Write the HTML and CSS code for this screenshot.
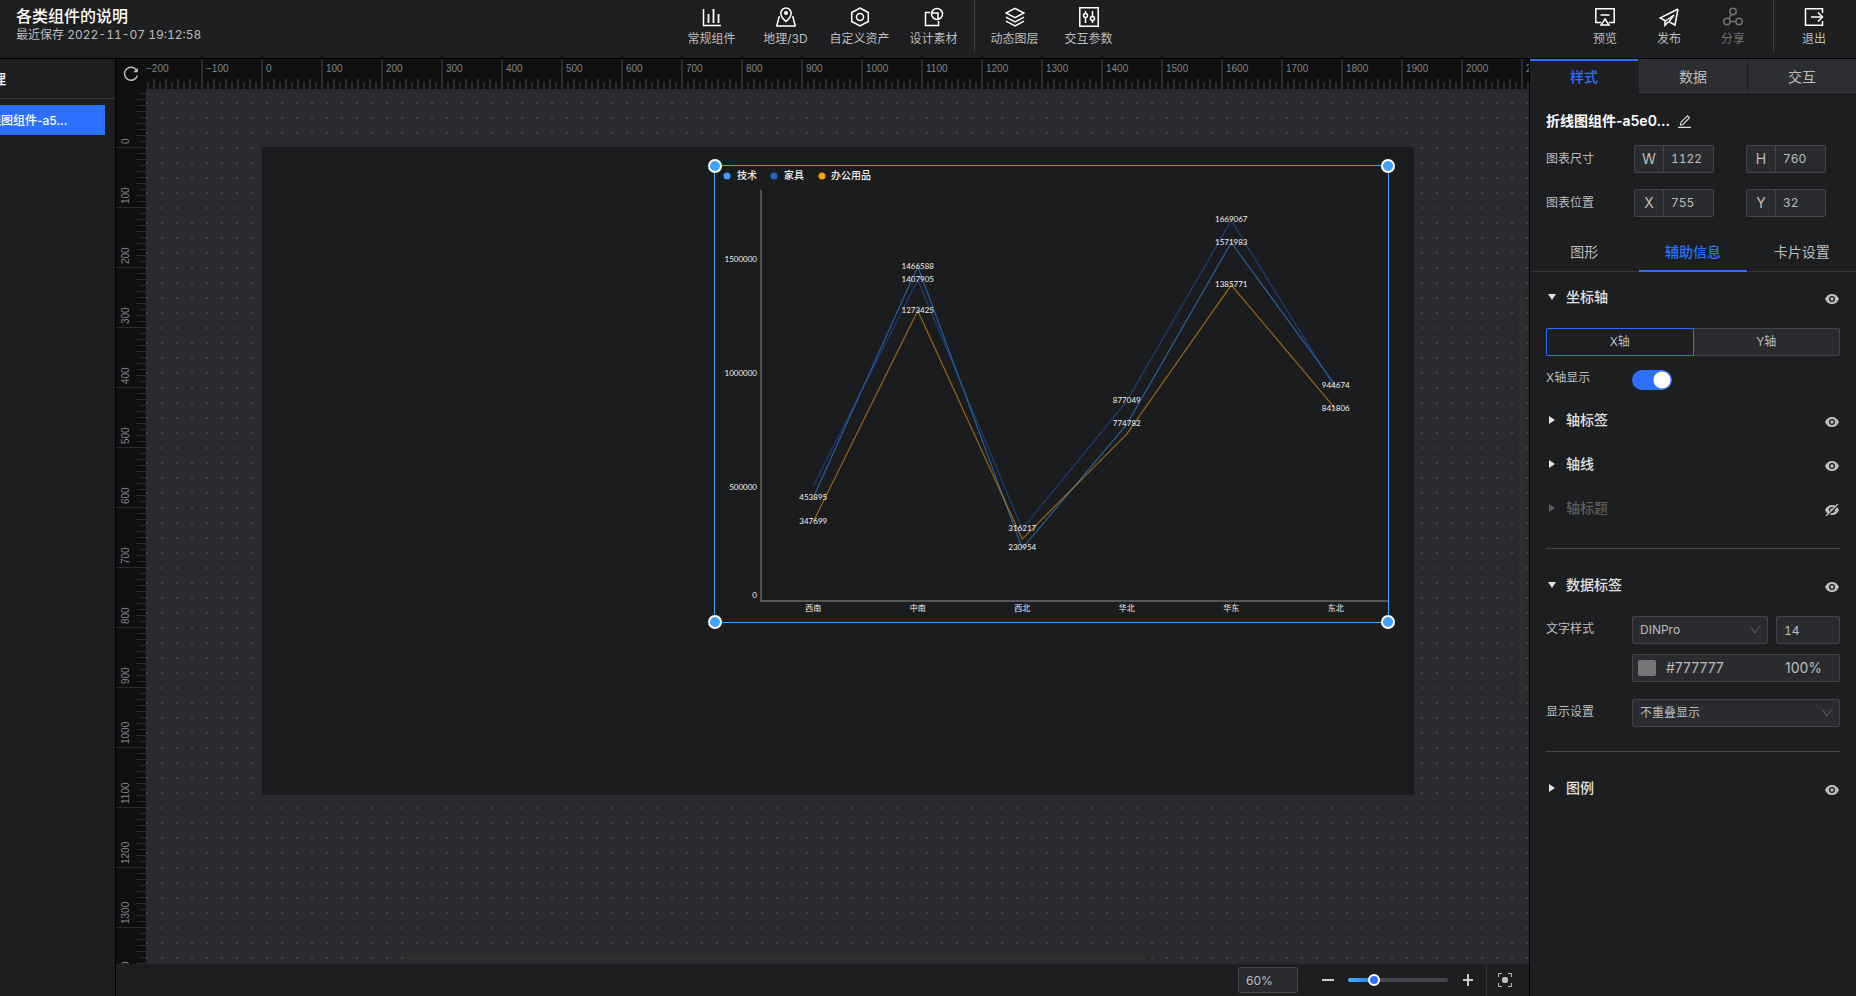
FILE: index.html
```html
<!DOCTYPE html>
<html lang="zh-CN">
<head>
    <meta charset="UTF-8">
    <meta name="viewport" content="width=device-width, initial-scale=1.0">
    <title>各类组件的说明</title>
    <link rel="stylesheet" href="styles.css">
</head>
<body>
    <svg width="0" height="0" class="sprite" aria-hidden="true">
        <symbol id="eye" viewBox="0 0 14 12">
            <path fill="currentColor" fill-rule="evenodd" d="M7 1C3.600 1 1.200 3 0 6c1.200 3 3.600 5 7 5s5.800-2 7-5c-1.200-3-3.600-5-7-5zm0 2a3 3 0 1 1 0 6 3 3 0 0 1 0-6z"/>
            <circle cx="7" cy="6" r="1.700" fill="currentColor"/>
        </symbol>
        <symbol id="eye-off" viewBox="0 0 14 12">
            <path fill="currentColor" fill-rule="evenodd" d="M7 1C3.600 1 1.200 3 0 6c1.200 3 3.600 5 7 5s5.800-2 7-5c-1.200-3-3.600-5-7-5zm0 2a3 3 0 1 1 0 6 3 3 0 0 1 0-6z"/>
            <circle cx="7" cy="6" r="1.700" fill="currentColor"/>
            <path d="M2 12.500L14 .5" stroke="#1d1e20" stroke-width="1.500"/>
            <path d="M1 12L13 0" stroke="currentColor" stroke-width="1.300"/>
        </symbol>
    </svg>

    <header class="header">
        <div class="project">
            <h1>各类组件的说明</h1>
            <p>最近保存 2022-11-07 19:12:58</p>
        </div>
        <nav class="toolbar">
            <button class="tool">
                <svg viewBox="0 0 20 20"><path d="M1.500 2v16.500H19" /><path d="M6.500 7v9M11.500 2v14M16.500 7v9" stroke-width="1.800"/></svg>
                常规组件
            </button>
            <button class="tool">
                <svg viewBox="0 0 20 20"><path d="M4 10H3L.8 19h18.400L17 10h-1"/><path d="M10 14.500C7 12 4.800 9.500 4.800 6.300a5.200 5.200 0 0 1 10.400 0C15.200 9.500 13 12 10 14.500z"/><circle cx="10" cy="6" r="2" fill="currentColor" stroke="none"/></svg>
                地理/3D
            </button>
            <button class="tool">
                <svg viewBox="0 0 20 20"><path d="M10 1l8.300 4.500v9L10 19l-8.300-4.500v-9z"/><circle cx="10" cy="10" r="3.500"/></svg>
                自定义资产
            </button>
            <button class="tool">
                <svg viewBox="0 0 20 20"><path d="M6 5.500H1.500v13h13V14"/><circle cx="13" cy="7" r="5.500"/><path d="M8 6h6v6"/></svg>
                设计素材
            </button>
            <span class="divider"></span>
            <button class="tool">
                <svg viewBox="0 0 20 20"><path d="M10 1.300l9 4.700-9 4.700L1 6z"/><path d="M1 10.200l9 4.600 9-4.600M1 14.200l9 4.600 9-4.600"/></svg>
                动态图层
            </button>
            <button class="tool">
                <svg viewBox="0 0 20 20"><path d="M.8.8h18.400v18.400H.8z"/><path d="M6.500 4v2.500M6.500 10.500V16M13.500 4v5.500M13.500 13.500V16"/><circle cx="6.500" cy="8.500" r="2"/><circle cx="13.500" cy="11.500" r="2"/></svg>
                交互参数
            </button>
        </nav>
        <div class="actions">
            <button class="tool">
                <svg viewBox="0 0 20 20"><path d="M6 15.500H.8V1.800h18.400v13.700H14M5.500 8h9"/><path d="M10 12l4 6H6z"/></svg>
                预览
            </button>
            <button class="tool">
                <svg viewBox="0 0 20 20"><path d="M19 2L1 11l5 2.500v4.800l3-3.300M19 2l-3 16-6-3.200L15 8l-8.500 6"/></svg>
                发布
            </button>
            <button class="tool" disabled>
                <svg viewBox="0 0 20 20"><circle cx="10" cy="4.500" r="3.200"/><circle cx="4" cy="14.500" r="3.200"/><circle cx="16" cy="14.500" r="3.200"/><path d="M8.300 7.300L5.700 11.800M7.200 14.500h5.600"/></svg>
                分享
            </button>
            <span class="divider"></span>
            <button class="tool">
                <svg viewBox="0 0 20 20"><path d="M18.500 6V1.800h-17v16.500h17V14M7 10h11M14 5.500l4.500 4.500-4.500 4.500"/></svg>
                退出
            </button>
        </div>
    </header>

    <div class="workspace">
        <aside class="layers">
            <h2>图层管理</h2>
            <button class="layer">折线图组件-a5...</button>
        </aside>

        <main class="editor">
            <div class="stage">
                <button class="reset" aria-label="重置">
                    <svg viewBox="0 0 16 16"><path d="M13.500 4.200A6.500 6.500 0 1 0 14.300 9.500" fill="none" stroke="currentColor" stroke-width="1.400"/><path d="M14.800 1.800v4.400h-4.400z" fill="currentColor"/></svg>
                </button>
                <div class="ruler-x" id="ruler-x"></div>
                <div class="ruler-y" id="ruler-y"></div>
                <div class="canvas">
                    <div class="artboard"></div>
                    <div class="component">
                        <svg viewBox="0 0 673 456" class="chart" id="chart">
                            <g class="legend">
                                <circle cx="12" cy="10" r="3.500" fill="#3d9fff"/><text x="22" y="13">技术</text>
                                <circle cx="59" cy="10" r="3.500" fill="#2563c9"/><text x="69" y="13">家具</text>
                                <circle cx="107" cy="10" r="3.500" fill="#fa9f0a"/><text x="116" y="13">办公用品</text>
                            </g>
                            <path class="axis" d="M46 24V435H673"/>
                        </svg>
                        <i class="handle tl"></i>
                        <i class="handle tr"></i>
                        <i class="handle bl"></i>
                        <i class="handle br"></i>
                    </div>
                    <div class="scroll-x"></div>
                    <div class="scroll-y"></div>
                </div>
            </div>
            <footer class="zoombar">
                <input class="field zoom-value" type="text" value="60%" aria-label="缩放比例">
                <button class="step" aria-label="缩小"><svg viewBox="0 0 12 12"><path d="M0 6h12"/></svg></button>
                <input class="slider" type="range" min="0" max="100" value="23" aria-label="缩放">
                <button class="step" aria-label="放大"><svg viewBox="0 0 12 12"><path d="M1 6h10M6 0v12"/></svg></button>
                <button class="fit" aria-label="适应画布">
                    <svg viewBox="0 0 14 14"><path d="M.5 4V.5H4M10 .5h3.500V4M13.500 10v3.500H10M4 13.500H.5V10" fill="none" stroke="currentColor"/><rect x="4" y="4" width="6" height="6" rx="2" fill="currentColor"/></svg>
                </button>
            </footer>
        </main>

        <aside class="panel">
            <div class="tabs">
                <button class="tab active">样式</button>
                <button class="tab">数据</button>
                <button class="tab">交互</button>
            </div>
            <div class="basic">
                <h2 class="name">折线图组件-a5e0...
                    <button aria-label="重命名"><svg viewBox="0 0 13 13"><path d="M2.500 10l.5-2.800L9.500.8l2 1.900L5 9.500zM0 12.400h13" fill="none" stroke="currentColor" stroke-width="1.100"/></svg></button>
                </h2>
                <div class="size-row">
                    <span class="label">图表尺寸</span>
                    <label class="number"><span>W</span><input type="text" value="1122"></label>
                    <label class="number"><span>H</span><input type="text" value="760"></label>
                </div>
                <div class="size-row">
                    <span class="label">图表位置</span>
                    <label class="number"><span>X</span><input type="text" value="755"></label>
                    <label class="number"><span>Y</span><input type="text" value="32"></label>
                </div>
            </div>
            <div class="subtabs">
                <button class="subtab">图形</button>
                <button class="subtab active">辅助信息</button>
                <button class="subtab">卡片设置</button>
            </div>
            <div class="settings">
                <section class="group">
                    <h3 class="fold open">坐标轴<button class="eye" aria-label="显示坐标轴"><svg><use href="#eye"/></svg></button></h3>
                    <div class="segment">
                        <button class="active">X轴</button>
                        <button>Y轴</button>
                    </div>
                    <div class="row switch-row">
                        <label class="label" for="axis-show">X轴显示</label>
                        <input class="switch" type="checkbox" id="axis-show" checked>
                    </div>
                    <h3 class="fold">轴标签<button class="eye" aria-label="显示轴标签"><svg><use href="#eye"/></svg></button></h3>
                    <h3 class="fold">轴线<button class="eye" aria-label="显示轴线"><svg><use href="#eye"/></svg></button></h3>
                    <h3 class="fold off">轴标题<button class="eye" aria-label="显示轴标题"><svg><use href="#eye-off"/></svg></button></h3>
                </section>
                <section class="group">
                    <h3 class="fold open">数据标签<button class="eye" aria-label="显示数据标签"><svg><use href="#eye"/></svg></button></h3>
                    <div class="row first">
                        <label class="label" for="font">文字样式</label>
                        <select class="field" id="font"><option>DINPro</option></select>
                        <input class="field font-size" type="text" value="14" aria-label="字号">
                    </div>
                    <div class="row color-row">
                        <div class="field color">
                            <span class="swatch"></span>
                            <input class="hex" type="text" value="#777777" aria-label="颜色">
                            <input class="alpha" type="text" value="100%" aria-label="不透明度">
                        </div>
                    </div>
                    <div class="row last">
                        <label class="label" for="overlap">显示设置</label>
                        <select class="field" id="overlap"><option>不重叠显示</option></select>
                    </div>
                </section>
                <section class="group">
                    <h3 class="fold">图例<button class="eye" aria-label="显示图例"><svg><use href="#eye"/></svg></button></h3>
                </section>
            </div>
        </aside>
    </div>

    <script src="script.js"></script>
</body>
</html>
```
FILE: styles.css
```css
* {
    box-sizing: border-box;
}

body {
    margin: 0;
    height: 100vh;
    display: flex;
    flex-direction: column;
    overflow: hidden;
    background: #1d1e20;
    color: #bcbdbe;
    font: 12px/18px Inter, "Noto Sans CJK SC", sans-serif;
}

button, input, select {
    font: inherit;
    color: inherit;
    margin: 0;
    padding: 0;
    border: none;
    border-radius: 0;
    background: none;
    outline: none;
}

button {
    cursor: pointer;
}

h1, h2, h3, p {
    margin: 0;
}

svg {
    display: block;
}

.sprite {
    position: absolute;
}

/* header */
.header {
    flex: none;
    display: flex;
    height: 59px;
    border-bottom: 1px solid #000;
}

.project {
    flex: 1 1 32px;
    padding: 6px 16px;
}

.project h1 {
    font-size: 16px;
    line-height: 20px;
    font-weight: 500;
    color: #fff;
}

.project p {
    font-variant-numeric: tabular-nums;
}

.toolbar {
    display: flex;
}

.actions {
    flex: 1 1 88px;
    display: flex;
    justify-content: flex-end;
    padding-right: 10px;
}

.tool {
    flex: none;
    width: 74px;
    height: 52px;
    padding-top: 7px;
    display: flex;
    flex-direction: column;
    align-items: center;
    gap: 3px;
    white-space: nowrap;
}

.actions .tool {
    width: 64px;
}

.tool svg {
    flex: none;
    width: 20px;
    height: 20px;
    fill: none;
    stroke: currentColor;
    stroke-width: 1.5;
    color: #fff;
}

.tool:disabled, .tool:disabled svg {
    color: #707173;
}

.divider {
    width: 1px;
    height: 52px;
    margin: 0 3px;
    background: #404144;
}

.actions .divider {
    margin: 0 8px;
}

/* layer list */
.workspace {
    flex: 1;
    min-height: 0;
    display: flex;
}

.layers {
    flex: none;
    width: 116px;
    overflow: hidden;
    border-right: 1px solid #000;
}

.layers h2 {
    height: 40px;
    text-indent: -50px;
    font-size: 14px;
    line-height: 40px;
    font-weight: 500;
    color: #fff;
    border-bottom: 1px solid #37383b;
    white-space: nowrap;
}

.layer {
    display: block;
    width: 105px;
    height: 30px;
    margin-top: 6px;
    padding-top: 2px;
    text-indent: -23px;
    text-align: left;
    font-weight: 500;
    color: #fff;
    background: #2d70ff;
    white-space: nowrap;
    overflow: hidden;
}

/* editor */
.editor {
    flex: 1;
    min-width: 0;
    display: flex;
    flex-direction: column;
}

.stage {
    flex: 1;
    min-height: 0;
    display: grid;
    grid-template: 30px minmax(0, 1fr) / 30px minmax(0, 1fr);
    background: #0f0f0f;
}

.reset svg {
    width: 16px;
    height: 16px;
    margin: 0 auto;
}

.ruler-x, .ruler-y {
    display: flex;
    overflow: hidden;
    color: #7f858d;
    font: 10px/12px "Liberation Sans", sans-serif;
}

.ruler-x {
    background:
        repeating-linear-gradient(90deg, #2b2b2c 0 2px, transparent 2px 60px) -5px 0,
        repeating-linear-gradient(90deg, #2b2b2c 0 2px, transparent 2px 12px) -5px 20px,
        repeating-linear-gradient(90deg, #2b2b2c 0 2px, transparent 2px 12px) -11px 23px;
    background-size: 200% 100%;
    background-repeat: no-repeat;
}

.ruler-x span {
    flex: none;
    width: 60px;
    padding: 4px 0;
}

.ruler-y {
    flex-direction: column;
    background:
        repeating-linear-gradient(180deg, #2b2b2c 0 1px, transparent 1px 60px) 0 -2px,
        repeating-linear-gradient(180deg, #2b2b2c 0 1px, transparent 1px 12px) 20px -2px,
        repeating-linear-gradient(180deg, #2b2b2c 0 1px, transparent 1px 12px) 23px -8px;
    background-size: 100% 200%;
    background-repeat: no-repeat;
}

.ruler-y span {
    flex: none;
    height: 60px;
    padding: 3px 4px;
    writing-mode: vertical-rl;
    transform: rotate(180deg);
}

.ruler-y span:first-child {
    height: 58px;
}

.canvas {
    position: relative;
    overflow: hidden;
    background:
        conic-gradient(from 0deg at 2px 2px, transparent 270deg, #43444a 0) 0 13px / 15px 15px,
        #2a2b2f;
}

.artboard {
    position: absolute;
    left: 116px;
    top: 58px;
    width: 1152px;
    height: 648px;
    background: #1b1c1d;
}

.component {
    position: absolute;
    left: 568px;
    top: 76px;
    width: 675px;
    height: 458px;
    border: 1px solid #3fa4ff;
}

.chart {
    width: 100%;
    height: 100%;
    fill: #f0f0f0;
    font: 8px Lato, "Noto Sans CJK SC", sans-serif;
}

.legend {
    font-size: 10px;
    font-weight: 500;
}

.axis {
    fill: none;
    stroke: #6a6b6b;
    stroke-width: 1.4;
}

.line {
    fill: none;
    stroke-width: 1.2;
    stroke-opacity: .6;
}

.chart .tick {
    text-anchor: end;
}

.chart .mid {
    text-anchor: middle;
}

.handle {
    position: absolute;
    width: 14px;
    height: 14px;
    border: 2px solid #fff;
    border-radius: 50%;
    background: #3fa4ff;
}

.tl, .tr {
    top: -7px;
}

.bl, .br {
    bottom: -7px;
}

.tl, .bl {
    left: -7px;
}

.tr, .br {
    right: -7px;
}

.scroll-x, .scroll-y {
    position: absolute;
    background: rgba(48, 48, 48, .8);
    border-radius: 3px;
}

.scroll-x {
    left: 260px;
    bottom: 4px;
    width: 740px;
    height: 6px;
}

.scroll-y {
    right: 4px;
    top: 201px;
    width: 6px;
    height: 417px;
}

/* zoom bar */
.field {
    height: 28px;
    padding: 0 7px;
    border: 1px solid #434447;
    border-radius: 2px;
    background-color: #2a2b2f;
}

.zoombar {
    flex: none;
    height: 32px;
    display: flex;
    justify-content: flex-end;
    align-items: center;
}

.zoom-value {
    width: 60px;
    height: 26px;
    margin-right: 24px;
}

.step svg {
    width: 12px;
    height: 12px;
    fill: none;
    stroke: #c8c8c9;
    stroke-width: 2;
}

.slider {
    appearance: none;
    width: 100px;
    height: 12px;
    margin: 0 14px;
}

.slider::-webkit-slider-runnable-track {
    height: 4px;
    border-radius: 2px;
    background: linear-gradient(90deg, #3fb4ff, #2d70ff 26%, #45464c 26%);
}

.slider::-webkit-slider-thumb {
    appearance: none;
    width: 12px;
    height: 12px;
    margin-top: -4px;
    border: 2px solid #fff;
    border-radius: 50%;
    background: #2d70ff;
}

.fit {
    width: 43px;
    height: 32px;
    margin-left: 12px;
    padding-left: 11px;
    border-left: 1px solid #333437;
}

.fit svg {
    width: 14px;
    height: 14px;
}

/* property panel */
.panel {
    flex: none;
    width: 327px;
    border-left: 1px solid #000;
}

.tabs {
    display: flex;
    height: 34px;
}

.tab {
    flex: 1;
    padding-top: 2px;
    font-size: 14px;
    background: #2d2e32;
    border-left: 1px solid #1d1e20;
    border-bottom: 1px solid #37383b;
}

.tab.active {
    padding-top: 0;
    background: none;
    border: none;
    border-top: 2px solid #2d70ff;
    color: #2d70ff;
    font-weight: 500;
}

.basic {
    padding: 18px 16px 0;
}

.name {
    display: flex;
    align-items: center;
    gap: 8px;
    height: 20px;
    font-size: 14px;
    font-weight: 600;
    color: #fff;
}

.name svg {
    width: 13px;
    height: 13px;
    color: #ddd;
}

.size-row {
    display: flex;
    align-items: center;
    height: 28px;
    margin-top: 16px;
}

.name + .size-row {
    margin-top: 14px;
}

.label {
    flex: none;
    width: 86px;
    line-height: 26px;
}

.size-row .label {
    width: 88px;
}

.number {
    display: flex;
    width: 80px;
    height: 28px;
    margin-right: 32px;
    line-height: 26px;
    border: 1px solid #434447;
    border-radius: 2px;
    background: #2a2b2f;
}

.number span {
    width: 29px;
    text-align: center;
    font-size: 14px;
    border-right: 1px solid #434447;
}

.number input {
    width: 49px;
    padding-left: 7px;
    font-variant-numeric: tabular-nums;
}

.subtabs {
    display: flex;
    height: 38px;
    margin-top: 17px;
    border-bottom: 1px solid #333437;
}

.subtab {
    flex: 1;
    height: 38px;
    font-size: 14px;
    border-bottom: 2px solid transparent;
}

.subtab.active {
    color: #2d70ff;
    font-weight: 500;
    border-color: #2d70ff;
}

.settings {
    padding: 3px 16px;
}

.group + .group {
    margin-top: 18px;
    padding-top: 14px;
    border-top: 1px solid #434447;
}

.fold {
    display: flex;
    align-items: center;
    height: 44px;
    font-size: 14px;
    font-weight: 500;
    color: #e1e1e2;
}

.fold::before {
    content: "";
    width: 6px;
    height: 8px;
    margin: 0 11px 0 3px;
    background: currentColor;
    clip-path: polygon(0 0, 100% 50%, 0 100%);
}

.fold.open::before {
    width: 8px;
    height: 6px;
    margin: 0 10px 0 2px;
    clip-path: polygon(0 0, 100% 0, 50% 100%);
}

.fold.off {
    color: #5a5b5d;
}

.eye {
    margin: 4px 1px 0 auto;
    color: #bcbdbe;
}

.eye svg {
    width: 14px;
    height: 12px;
    overflow: visible;
}

.segment {
    display: flex;
    margin-top: 9px;
}

.segment button {
    flex: 1;
    height: 28px;
    border: 1px solid #434447;
    border-left: none;
    border-radius: 0 2px 2px 0;
    background: #2a2b2f;
}

.segment .active {
    border: 1px solid #2d70ff;
    border-radius: 2px 0 0 2px;
    background: none;
}

.row {
    display: flex;
    height: 28px;
    margin-top: 17px;
}

.row.first {
    margin-top: 9px;
}

.row.last {
    margin-bottom: 24px;
}

.group:last-child {
    margin-top: 0;
}

.row select {
    flex: 1;
    min-width: 0;
    appearance: none;
    background-image: url("data:image/svg+xml,%3Csvg xmlns='http://www.w3.org/2000/svg' width='10' height='8'%3E%3Cpath d='M.5.5L5 7L9.500.5' fill='none' stroke='%23646568'/%3E%3C/svg%3E");
    background-repeat: no-repeat;
    background-position: right 7px center;
}

.switch-row {
    height: 32px;
    margin: 9px 0 1px;
}

.switch {
    appearance: none;
    width: 40px;
    height: 20px;
    margin-top: 5px;
    border-radius: 10px;
    background: radial-gradient(circle at 30px 10px, #fff 8px, #2d70ff 9px);
}

.font-size {
    width: 64px;
    margin-left: 8px;
    font-variant-numeric: tabular-nums;
}

.color-row {
    margin-top: 10px;
    padding-left: 86px;
}

.color {
    display: flex;
    align-items: center;
    width: 100%;
    padding: 0 5px;
    font-size: 14px;
}

.swatch {
    width: 18px;
    height: 16px;
    border-radius: 2px;
    background: #777;
}

.hex {
    flex: 1;
    min-width: 0;
    padding-left: 10px;
}

.alpha {
    width: 49px;
}
```
FILE: script.js
```js
const svgNS = 'http://www.w3.org/2000/svg';
const chart = document.getElementById('chart');

const regions = ['西南', '中南', '西北', '华北', '华东', '东北'];
const series = [
    { color: '#2a8df0', values: [453895, 1466588, 230954, 774782, 1571983, 944674], hidden: [] },
    { color: '#1b55b8', values: [504000, 1407905, 316217, 877049, 1669067, 929000], hidden: [0, 5] },
    { color: '#e8940f', values: [347699, 1273425, 272000, 732000, 1385771, 841806], hidden: [2, 3] }
];

const scaleX = i => 46 + 104.5 * (i + 0.5);
const scaleY = v => 435 - v * 114 / 500000;

function add(tag, attrs, text) {
    const el = document.createElementNS(svgNS, tag);
    for (const key in attrs) {
        el.setAttribute(key, attrs[key]);
    }
    if (text !== undefined) {
        el.textContent = text;
    }
    chart.appendChild(el);
}

series.forEach(s => {
    const points = s.values.map((v, i) => scaleX(i) + ',' + scaleY(v)).join(' ');
    add('polyline', { class: 'line', points: points, stroke: s.color });
});

// labels that would overlap are left out
series.forEach(s => {
    s.values.forEach((v, i) => {
        if (!s.hidden.includes(i)) {
            add('text', { class: 'mid', x: scaleX(i), y: scaleY(v) + 2 }, v);
        }
    });
});

regions.forEach((name, i) => add('text', { class: 'mid', x: scaleX(i), y: 445 }, name));

[500000, 1000000, 1500000].forEach(v => add('text', { class: 'tick', x: 42, y: scaleY(v) + 3 }, v));
add('text', { class: 'tick', x: 42, y: 432 }, 0);

function ruler(id, from, to) {
    const box = document.getElementById(id);
    for (let v = from; v <= to; v += 100) {
        const mark = document.createElement('span');
        mark.textContent = String(v).replace('-', '−');
        box.appendChild(mark);
    }
}

ruler('ruler-x', -200, 2100);
ruler('ruler-y', 0, 1400);
```
